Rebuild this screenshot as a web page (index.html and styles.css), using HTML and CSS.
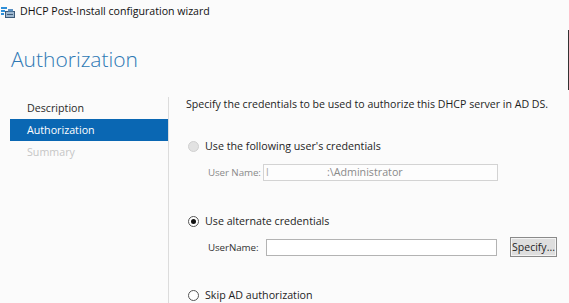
FILE: index.html
```html
<!DOCTYPE html>
<html>
<head>
<meta charset="utf-8">
<link rel="stylesheet" href="styles.css">
</head>
<body>
<div class="window">
  <div class="titlebar">
    <svg class="appicon" width="14" height="13" viewBox="0 0 14 13">
      <rect x="0" y="2" width="6" height="2" fill="#2f8fd8"/>
      <rect x="0" y="5" width="4" height="2" fill="#2f8fd8"/>
      <rect x="0" y="8" width="3" height="2" fill="#2f8fd8"/>
      <rect x="4.5" y="6.5" width="9" height="6" fill="#9db7cf" stroke="#3d5a78"/>
      <rect x="6" y="9" width="6" height="1" fill="#3d5a78"/>
      <rect x="7" y="4" width="5" height="2.5" fill="#5a8fc0"/>
    </svg>
    <span class="title">DHCP Post-Install configuration wizard</span>
  </div>
  <h1 class="heading">Authorization</h1>
  <div class="main">
    <nav class="nav">
      <div class="nav-item">Description</div>
      <div class="nav-item active">Authorization</div>
      <div class="nav-item disabled">Summary</div>
    </nav>
    <section class="content">
      <p class="intro">Specify the credentials to be used to authorize this DHCP server in AD DS.</p>
      <div class="option disabled-opt">
        <span class="radio radio-disabled"></span>
        <span class="opt-label">Use the following user's credentials</span>
      </div>
      <div class="field field-disabled">
        <span class="field-label">User Name:</span>
        <div class="input input-disabled"><span class="mask">l</span><span class="val">:\Administrator</span></div>
      </div>
      <div class="option opt2">
        <span class="radio radio-checked"></span>
        <span class="opt-label">Use alternate credentials</span>
      </div>
      <div class="field field2">
        <span class="field-label">UserName:</span>
        <div class="input input2"></div>
        <button class="btn">Specify...</button>
      </div>
      <div class="option opt3">
        <span class="radio"></span>
        <span class="opt-label">Skip AD authorization</span>
      </div>
    </section>
  </div>
  <div class="edge"></div>
</div>
</body>
</html>
```

FILE: styles.css
```css
html, body {
  margin: 0;
  padding: 0;
  background: #fbfbfb;
}
.window {
  position: relative;
  width: 569px;
  height: 303px;
  overflow: hidden;
  font-family: "Open Sans", "Noto Sans", sans-serif;
  font-size: 10.7px;
  color: #1e1e1e;
}
.titlebar {
  display: flex;
  align-items: center;
  height: 22px;
  padding-left: 1px;
  gap: 5px;
}
.appicon {
  flex: none;
}
.title {
  font-size: 10.6px;
  color: #111;
}
.heading {
  margin: 22px 0 0 11px;
  font-weight: 300;
  font-size: 21px;
  line-height: 30px;
  color: #2d78b4;
}
.main {
  display: flex;
  margin-top: 23px;
}
.nav {
  width: 158px;
  margin-left: 10px;
  border-right: 1px solid #dcdcdc;
  height: 210px;
}
.nav-item {
  height: 22px;
  line-height: 22px;
  padding-left: 17px;
  color: #2a2a2a;
}
.nav-item.active {
  background: #0a67b3;
  color: #fff;
}
.nav-item.disabled {
  color: #c6c6c6;
}
.content {
  padding-left: 17px;
  flex: 1;
}
.intro {
  margin: 0;
  line-height: 14px;
  font-size: 10.6px;
  color: #1e1e1e;
}
.option {
  display: flex;
  align-items: center;
  gap: 6px;
  margin-top: 28px;
  margin-left: 2px;
  height: 14px;
}
.radio {
  box-sizing: border-box;
  flex: none;
  width: 11px;
  height: 11px;
  border-radius: 50%;
  border: 1px solid #555;
  background: #fff;
  position: relative;
}
.radio-disabled {
  border-color: #d0d0d0;
  background: #e2e2e2;
}
.radio-checked::after {
  content: "";
  position: absolute;
  left: 2px;
  top: 2px;
  width: 5px;
  height: 5px;
  border-radius: 50%;
  background: #111;
}
.field {
  display: flex;
  align-items: center;
  margin-left: 22px;
  margin-top: 10px;
  height: 18px;
}
.field-label {
  flex: none;
  white-space: nowrap;
  font-size: 9.8px;
  letter-spacing: -0.1px;
  color: #333;
}
.field-disabled .field-label {
  color: #8a8a8a;
  width: 55px;
}
.field2 .field-label {
  width: 58px;
}
.input {
  box-sizing: border-box;
  flex: none;
  height: 17px;
  border: 1px solid #bdbdbd;
  background: #fff;
  display: flex;
  align-items: center;
}
.input-disabled {
  width: 235px;
  border-color: #d3d3d3;
  background: #fdfdfd;
  color: #8a8a8a;
  padding-left: 2px;
}
.mask {
  width: 61px;
  color: #aaa;
}
.input2 {
  width: 231px;
  border-color: #b3b3b3;
}
.opt2 {
  margin-top: 33px;
}
.field2 {
  margin-top: 9px;
  height: 20px;
}
.btn {
  box-sizing: border-box;
  flex: none;
  margin-left: 13px;
  width: 47px;
  height: 20px;
  padding: 0;
  border: 1px solid #8a8a8a;
  background: #dedede;
  font-family: "Open Sans", "Noto Sans", sans-serif;
  font-size: 10.5px;
  color: #1e1e1e;
  box-shadow: inset 0 0 0 1px #f4f4f4;
}
.opt3 {
  margin-top: 31px;
}
.edge {
  position: absolute;
  right: 0;
  top: 30px;
  width: 1px;
  height: 60px;
  background: #333;
}
```
